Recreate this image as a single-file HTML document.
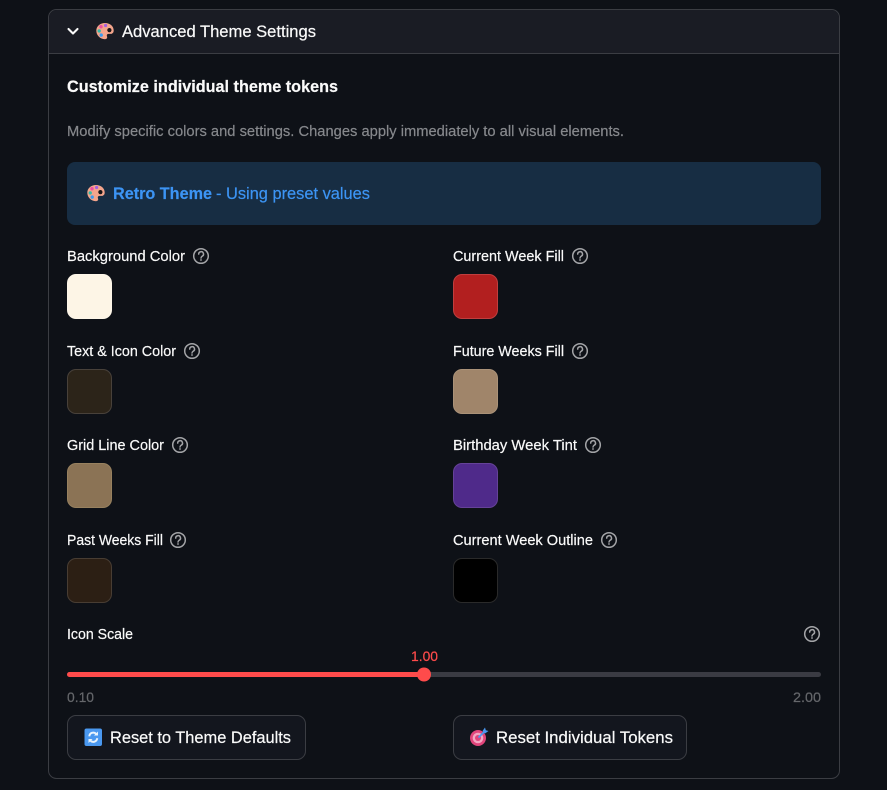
<!DOCTYPE html>
<html lang="en">
<head>
<meta charset="utf-8">
<title>Advanced Theme Settings</title>
<style>
html,body{margin:0;padding:0;background:#0e1117;width:887px;height:790px;overflow:hidden}
svg{display:block}
text{font-family:"Liberation Sans","Noto Sans CJK JP",sans-serif;white-space:pre;stroke-width:.2px;paint-order:stroke}
.l{font-size:15px;fill:#fafafa;stroke:#fafafa}
.g{fill:#86888c;stroke:#86888c}
.m{fill:#65676b;stroke:#65676b}
.w{fill:#fafafa;stroke:#fafafa}
.b{fill:#3c94f4;stroke:#3c94f4}
.sw{stroke-width:1}
.q circle{fill:none;stroke:#a3a4a7;stroke-width:1.5}
.q path{fill:none;stroke:#a3a4a7;stroke-width:1.5;stroke-linecap:round}
.q .d{fill:#a3a4a7;stroke:none}
</style>
</head>
<body>
<svg width="887" height="790" viewBox="0 0 887 790" xmlns="http://www.w3.org/2000/svg">
<defs>
<g id="q" class="q">
<circle cx="0" cy="0" r="7.3"/>
<path d="M-2.300 -1.900A2.400 2.400 0 1 1 1.200 .2C.4 .7 0 1 0 2"/>
<circle class="d" cx="0" cy="4" r=".9"/>
</g>
<g id="palette">
<path d="M9 .5C4 .5 .3 3.800 .3 8.300c0 4.600 3.800 8.400 8.700 8.400 1.400 0 2.200-.8 2.200-1.900 0-.7-.4-1.100-.4-1.800 0-1 .8-1.600 1.900-1.600h2c1.600 0 3-1.200 3-3.300C17.700 3.700 14 .5 9 .5z" fill="#f4a58c"/>
<circle cx="13.400" cy="7.600" r="2.100" fill="#1a1416"/>
<circle cx="5" cy="4.200" r="1.700" fill="#ef4fa0"/>
<circle cx="9.600" cy="3" r="1.600" fill="#a560e0"/>
<circle cx="3.200" cy="8.400" r="1.700" fill="#35b9a8"/>
<circle cx="5.200" cy="12.600" r="1.700" fill="#3b9cf0"/>
</g>
</defs>

<rect width="887" height="790" fill="#0e1117"/>

<!-- panel -->
<rect x="48.500" y="9.500" width="791" height="769" rx="8" fill="#0e1117" stroke="#3b3d43"/>
<path d="M49 53V18a8 8 0 0 1 8-8H831a8 8 0 0 1 8 8V53z" fill="#1a1c24"/>
<path d="M49 53.500H839" stroke="#3b3d43"/>

<!-- header -->
<path d="M68.500 29l4.500 4.500 4.500-4.500" fill="none" stroke="#fafafa" stroke-width="2.100" stroke-linecap="round" stroke-linejoin="round"/>
<use href="#palette" x="96" y="22.500"/>
<text class="w" x="122" y="37" font-size="17" textLength="194" lengthAdjust="spacingAndGlyphs">Advanced Theme Settings</text>

<text class="w" x="67" y="92" font-size="17" font-weight="700" textLength="271" lengthAdjust="spacingAndGlyphs">Customize individual theme tokens</text>
<text class="g" x="67" y="136" font-size="15" textLength="557" lengthAdjust="spacingAndGlyphs">Modify specific colors and settings. Changes apply immediately to all visual elements.</text>

<!-- alert -->
<rect x="67" y="162" width="754" height="63" rx="8" fill="#172d43"/>
<use href="#palette" x="87" y="184.500"/>
<text class="b" x="113" y="199" font-size="17" font-weight="700" textLength="99" lengthAdjust="spacingAndGlyphs">Retro Theme</text>
<text class="b" x="216" y="199" font-size="17" textLength="154" lengthAdjust="spacingAndGlyphs">- Using preset values</text>

<!-- left column -->
<text class="l" x="67" y="261" textLength="118" lengthAdjust="spacingAndGlyphs">Background Color</text>
<use href="#q" x="201" y="256"/>
<rect class="sw" x="67.500" y="274.500" width="44" height="44" rx="8.500" fill="#fdf5e6" stroke="#fdf6e9"/>

<text class="l" x="67" y="356" textLength="109" lengthAdjust="spacingAndGlyphs">Text &amp; Icon Color</text>
<use href="#q" x="192" y="351"/>
<rect class="sw" x="67.500" y="369.500" width="44" height="44" rx="8.500" fill="#2c2419" stroke="#48413a"/>

<text class="l" x="67" y="450" textLength="97" lengthAdjust="spacingAndGlyphs">Grid Line Color</text>
<use href="#q" x="180" y="445"/>
<rect class="sw" x="67.500" y="463.500" width="44" height="44" rx="8.500" fill="#8b7355" stroke="#97815f"/>

<text class="l" x="67" y="545" textLength="96" lengthAdjust="spacingAndGlyphs">Past Weeks Fill</text>
<use href="#q" x="178" y="540"/>
<rect class="sw" x="67.500" y="558.500" width="44" height="44" rx="8.500" fill="#2c1f14" stroke="#483d33"/>

<!-- right column -->
<text class="l" x="453" y="261" textLength="111" lengthAdjust="spacingAndGlyphs">Current Week Fill</text>
<use href="#q" x="580" y="256"/>
<rect class="sw" x="453.500" y="274.500" width="44" height="44" rx="8.500" fill="#b21f1f" stroke="#c03e3e"/>

<text class="l" x="453" y="356" textLength="111" lengthAdjust="spacingAndGlyphs">Future Weeks Fill</text>
<use href="#q" x="580" y="351"/>
<rect class="sw" x="453.500" y="369.500" width="44" height="44" rx="8.500" fill="#a0856a" stroke="#aa9278"/>

<text class="l" x="453" y="450" textLength="124" lengthAdjust="spacingAndGlyphs">Birthday Week Tint</text>
<use href="#q" x="593" y="445"/>
<rect class="sw" x="453.500" y="463.500" width="44" height="44" rx="8.500" fill="#4f2a8a" stroke="#654298"/>

<text class="l" x="453" y="545" textLength="140" lengthAdjust="spacingAndGlyphs">Current Week Outline</text>
<use href="#q" x="609" y="540"/>
<rect class="sw" x="453.500" y="558.500" width="44" height="44" rx="8.500" fill="#000000" stroke="#2a2a2a"/>

<!-- slider -->
<text class="l" x="67" y="639" textLength="66" lengthAdjust="spacingAndGlyphs">Icon Scale</text>
<use href="#q" x="812" y="634"/>
<text x="411" y="661" font-size="14" fill="#ff4b4b" stroke="#ff4b4b" textLength="27" lengthAdjust="spacingAndGlyphs">1.00</text>
<rect x="67" y="672" width="754" height="5" rx="2.500" fill="#3a3b43"/>
<rect x="67" y="672" width="357" height="5" rx="2.500" fill="#ff4b4b"/>
<circle cx="424" cy="674.500" r="7" fill="#ff4b4b"/>
<text class="m" x="67" y="702" font-size="14" textLength="27" lengthAdjust="spacingAndGlyphs">0.10</text>
<text class="m" x="793" y="702" font-size="14" textLength="28" lengthAdjust="spacingAndGlyphs">2.00</text>

<!-- buttons -->
<rect x="67.500" y="715.500" width="238" height="44" rx="8.500" fill="#13161e" stroke="#3b3d43"/>
<rect x="84.500" y="728.500" width="17.500" height="17.500" rx="2" fill="#4a98f0"/>
<path d="M89.300 736.300a4 4 0 0 1 6.900-2.400M97.200 738.200a4 4 0 0 1-6.900 2.400" fill="none" stroke="#e8f3fd" stroke-width="2"/>
<path d="M98 731.500v4h-4zM88.500 743v-4h4z" fill="#e8f3fd"/>
<text class="w" x="110" y="743" font-size="17" textLength="181" lengthAdjust="spacingAndGlyphs">Reset to Theme Defaults</text>

<rect x="453.500" y="715.500" width="233" height="44" rx="8.500" fill="#13161e" stroke="#3b3d43"/>
<circle cx="478" cy="738" r="8" fill="#e0457b"/>
<circle cx="478" cy="738" r="5.300" fill="#f3a6c2"/>
<circle cx="478" cy="738" r="3" fill="#e0457b"/>
<path d="M478.500 737.500L485 731" stroke="#4a98f0" stroke-width="1.800"/>
<path d="M482.500 731l2.500-3.500 .8 2.700 2.700 .8-3.500 2.500z" fill="#4a98f0"/>
<text class="w" x="496" y="743" font-size="17" textLength="177" lengthAdjust="spacingAndGlyphs">Reset Individual Tokens</text>
</svg>
</body>
</html>
